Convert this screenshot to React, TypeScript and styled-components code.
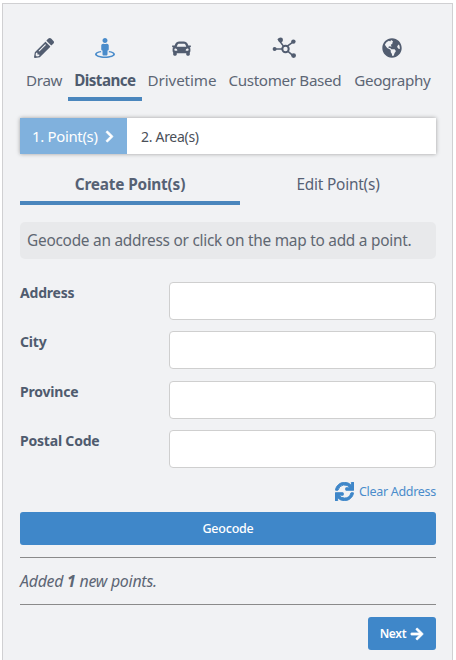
import React from 'react';
import styled, { createGlobalStyle } from 'styled-components';
import { FaArrowRight, FaCar, FaChevronRight, FaGlobeAmericas, FaPencilAlt, FaStreetView, FaSync } from 'react-icons/fa';

const GlobalStyle = createGlobalStyle`
  html, body {
    margin: 0;
    padding: 0;
    background: #fff;
    font-family: "Noto Sans", "Open Sans", sans-serif;
  }
`;

const Panel = styled.div`
  box-sizing: border-box;
  width: 451px;
  height: 657px;
  margin: 3px 0 0 2px;
  padding: 32px 16px 0 17px;
  background: #f1f2f4;
  border: 1px solid #d0d0d2;
  border-bottom: none;
  color: #4f5b6e;
`;

const ModeTabs = styled.div`
  display: flex;
`;

const ModeTab = styled.div<{ $active?: boolean }>`
  display: flex;
  flex-direction: column;
  align-items: center;
  padding: 0 6px;
  height: 65px;
  box-sizing: border-box;
  border-bottom: 4px solid ${p => (p.$active ? '#4a86bd' : 'transparent')};
  font-size: 15.2px;
  letter-spacing: ${p => (p.$active ? '-0.55px' : '-0.33px')};
  font-weight: ${p => (p.$active ? 700 : 400)};
  color: ${p => (p.$active ? '#4f5b6e' : '#5d6675')};
  white-space: nowrap;
  &:nth-child(3) {
    letter-spacing: -0.1px;
  }
  &:nth-child(4) {
    padding-right: 7px;
  }
`;

const ModeIcon = styled.div<{ $active?: boolean }>`
  height: 24px;
  display: flex;
  align-items: center;
  margin-bottom: 10px;
  font-size: 20px;
  color: ${p => (p.$active ? '#4a8ccb' : '#525d70')};
`;

const Stepper = styled.div`
  display: flex;
  height: 36px;
  margin-top: 17px;
  background: #fff;
  box-shadow: 0 0 4px rgba(0, 0, 0, 0.35);
  letter-spacing: -0.3px;
`;

const Step = styled.div<{ $active?: boolean }>`
  display: flex;
  align-items: center;
  gap: 5px;
  width: ${p => (p.$active ? '107px' : 'auto')};
  box-sizing: border-box;
  padding-left: ${p => (p.$active ? '12px' : '14px')};
  background: ${p => (p.$active ? '#80b1dd' : 'transparent')};
  color: ${p => (p.$active ? '#fff' : '#4a4f58')};
  font-size: ${p => (p.$active ? '14.9px' : '14px')};
  svg {
    stroke: currentColor;
    stroke-width: 30px;
  }
`;

const SubTabs = styled.div`
  display: flex;
  margin-top: 14px;
`;

const SubTab = styled.div<{ $active?: boolean }>`
  flex: ${p => (p.$active ? '0 0 220px' : '1')};
  height: 37px;
  padding-top: 6px;
  box-sizing: border-box;
  text-align: center;
  font-size: 15.4px;
  letter-spacing: -0.2px;
  font-weight: ${p => (p.$active ? 700 : 400)};
  color: #566174;
  border-bottom: 4px solid ${p => (p.$active ? '#4a86bd' : 'transparent')};
`;

const Hint = styled.div`
  display: flex;
  align-items: center;
  height: 37px;
  margin-top: 17px;
  padding-left: 7px;
  border-radius: 5px;
  background: #e8e9eb;
  color: #5f6772;
  font-size: 15.4px;
  letter-spacing: -0.25px;
  white-space: nowrap;
`;

const Form = styled.div`
  display: flex;
  flex-direction: column;
  gap: 11.4px;
  margin-top: 23px;
`;

const Row = styled.div`
  display: flex;
  align-items: flex-start;
`;

const Label = styled.label`
  width: 149px;
  padding-top: 1px;
  font-size: 14px;
  font-weight: 700;
  letter-spacing: -0.2px;
  color: #4f5b6e;
`;

const Input = styled.input`
  flex: 1;
  min-width: 0;
  height: 38px;
  box-sizing: border-box;
  background: #fff;
  border: 1px solid #cfcfcf;
  border-radius: 4px;
`;

const ClearRow = styled.div`
  display: flex;
  justify-content: flex-end;
  align-items: center;
  gap: 5px;
  margin-top: 13px;
  height: 20px;
  color: #4a8ccb;
  font-size: 12.5px;
  letter-spacing: -0.3px;
  svg {
    font-size: 19px;
    color: #3f87c9;
    stroke: currentColor;
    stroke-width: 25px;
  }
`;

const WideButton = styled.button`
  display: block;
  width: 100%;
  height: 33px;
  margin: 11px 0 12px;
  border: none;
  border-radius: 3px;
  background: #3f87c9;
  color: #fff;
  font-family: inherit;
  font-size: 12.5px;
  font-weight: 500;
  letter-spacing: -0.2px;
`;

const Rule = styled.hr`
  margin: 0;
  border: none;
  border-top: 1px solid #8a8a8a;
`;

const Status = styled.div`
  height: 46px;
  display: flex;
  align-items: center;
  font-size: 15.9px;
  font-style: italic;
  letter-spacing: -0.25px;
  color: #5d6675;
  white-space: pre;
`;

const Footer = styled.div`
  display: flex;
  justify-content: flex-end;
  margin-top: 12px;
`;

const NextButton = styled.button`
  display: flex;
  align-items: center;
  justify-content: center;
  gap: 4px;
  width: 68px;
  height: 33px;
  border: none;
  border-radius: 3px;
  background: #3f87c9;
  color: #fff;
  font-family: inherit;
  font-size: 12px;
  font-weight: 600;
  letter-spacing: -0.3px;
  svg {
    font-size: 14px;
    stroke: currentColor;
    stroke-width: 25px;
  }
`;

const CarIcon = styled(FaCar)`
  font-size: 19px;
`;

const NetworkIcon = () => (
  <svg width="26" height="22" viewBox="0 0 26 22" fill="currentColor" aria-hidden="true">
    <circle cx="13.5" cy="12" r="3.2" fill="none" stroke="currentColor" strokeWidth="2" />
    <path d="M6 1.8 11.6 9.4M15 9.4l6.2-4.6M4 12h6.3M16 14.4l5 4.2" stroke="currentColor" strokeWidth="1.6" fill="none" />
    <circle cx="8.6" cy="3" r="2.4" />
    <circle cx="21.4" cy="4.6" r="2.2" />
    <circle cx="2.6" cy="12" r="2" />
    <circle cx="21.6" cy="18.6" r="2.4" />
  </svg>
);

const modes = [
  { label: 'Draw', icon: <FaPencilAlt /> },
  { label: 'Distance', icon: <FaStreetView />, active: true },
  { label: 'Drivetime', icon: <CarIcon /> },
  { label: 'Customer Based', icon: <NetworkIcon /> },
  { label: 'Geography', icon: <FaGlobeAmericas /> },
];

const fields = ['Address', 'City', 'Province', 'Postal Code'];

export default function App() {
  return (
    <>
      <GlobalStyle />
      <Panel>
        <ModeTabs>
          {modes.map(mode => (
            <ModeTab key={mode.label} $active={mode.active}>
              <ModeIcon $active={mode.active}>{mode.icon}</ModeIcon>
              {mode.label}
            </ModeTab>
          ))}
        </ModeTabs>
        <Stepper>
          <Step $active>
            1. Point(s) <FaChevronRight size={13} />
          </Step>
          <Step>2. Area(s)</Step>
        </Stepper>
        <SubTabs>
          <SubTab $active>Create Point(s)</SubTab>
          <SubTab>Edit Point(s)</SubTab>
        </SubTabs>
        <Hint>Geocode an address or click on the map to add a point.</Hint>
        <Form>
          {fields.map(field => (
            <Row key={field}>
              <Label>{field}</Label>
              <Input />
            </Row>
          ))}
        </Form>
        <ClearRow>
          <FaSync />
          Clear Address
        </ClearRow>
        <WideButton>Geocode</WideButton>
        <Rule />
        <Status>
          Added <b>1</b> new points.
        </Status>
        <Rule />
        <Footer>
          <NextButton>
            Next <FaArrowRight />
          </NextButton>
        </Footer>
      </Panel>
    </>
  );
}
